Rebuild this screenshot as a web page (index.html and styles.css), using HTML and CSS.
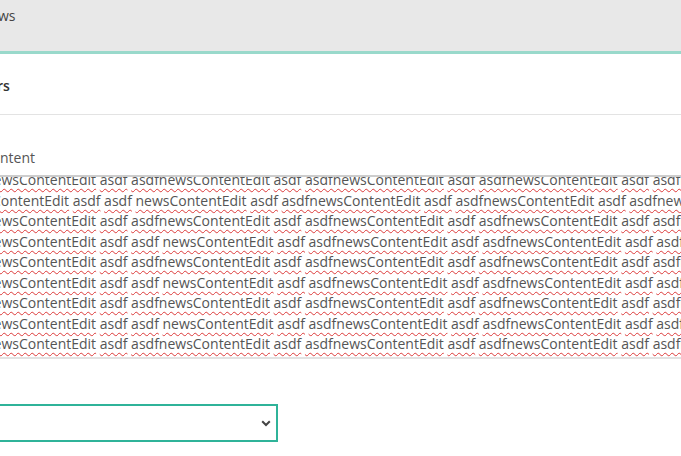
FILE: index.html
```html
<!DOCTYPE html>
<html lang="en">
<head>
<meta charset="utf-8">
<title>Edit News</title>
<link rel="stylesheet" href="styles.css">
</head>
<body>
<header class="topbar"><span class="crumb">ws</span></header>
<section class="panel-head"><h2 class="panel-title">rs</h2></section>
<div class="field">
  <label class="field-label">ntent</label>
  <div class="textarea">
    <div class="lines">
      <div class="line line-a">newsContentEdit asdf asdfnewsContentEdit asdf asdfnewsContentEdit asdf asdfnewsContentEdit asdf asdfnewsContentEdit asdf asdf</div>
      <div class="line line-c">newsContentEdit asdf asdf newsContentEdit asdf asdfnewsContentEdit asdf asdfnewsContentEdit asdf asdfnewsContentEdit asdf asdf</div>
      <div class="line line-a">newsContentEdit asdf asdfnewsContentEdit asdf asdfnewsContentEdit asdf asdfnewsContentEdit asdf asdfnewsContentEdit asdf asdf</div>
      <div class="line line-a">newsContentEdit asdf asdf newsContentEdit asdf asdfnewsContentEdit asdf asdfnewsContentEdit asdf asdfnewsContentEdit asdf asdf</div>
      <div class="line line-a">newsContentEdit asdf asdfnewsContentEdit asdf asdfnewsContentEdit asdf asdfnewsContentEdit asdf asdfnewsContentEdit asdf asdf</div>
      <div class="line line-a">newsContentEdit asdf asdf newsContentEdit asdf asdfnewsContentEdit asdf asdfnewsContentEdit asdf asdfnewsContentEdit asdf asdf</div>
      <div class="line line-a">newsContentEdit asdf asdfnewsContentEdit asdf asdfnewsContentEdit asdf asdfnewsContentEdit asdf asdfnewsContentEdit asdf asdf</div>
      <div class="line line-a">newsContentEdit asdf asdf newsContentEdit asdf asdfnewsContentEdit asdf asdfnewsContentEdit asdf asdfnewsContentEdit asdf asdf</div>
      <div class="line line-a">newsContentEdit asdf asdfnewsContentEdit asdf asdfnewsContentEdit asdf asdfnewsContentEdit asdf asdfnewsContentEdit asdf asdf</div>
    </div>
  </div>
</div>
<div class="select">
  <span class="select-value"></span>
  <svg class="chevron" width="10" height="7" viewBox="0 0 10 7"><path d="M1.2 1.2 L5 5 L8.8 1.2" fill="none" stroke="#444" stroke-width="2"/></svg>
</div>
<script src="script.js"></script>
</body>
</html>
```
FILE: styles.css
```css
html, body {
  margin: 0;
  padding: 0;
  overflow: hidden;
  background: #fff;
  font-family: "Open Sans", "Liberation Sans", sans-serif;
  font-size: 14px;
  color: #555;
}
.topbar {
  height: 51px;
  background: #e8e8e8;
  border-bottom: 3px solid #99d9cb;
  box-sizing: content-box;
  padding: 0;
  line-height: 20px;
}
.crumb {
  display: block;
  padding-top: 6px;
  margin-left: -2px;
  color: #444;
}
.panel-head {
  height: 61px;
  border-bottom: 1px solid #e3e3e3;
  box-sizing: border-box;
  padding-top: 22px;
}
.panel-title {
  margin: 0 0 0 -3px;
  font-size: 14px;
  line-height: 20px;
  font-weight: 600;
  color: #333;
}
.field {
  padding-top: 33px;
}
.field-label {
  display: block;
  line-height: 20px;
  margin-bottom: 7px;
  color: #555;
}
.textarea {
  border-top: 2px solid #cdcdcd;
  border-bottom: 2px solid #e2e2e2;
  height: 180px;
  overflow: hidden;
}
.lines {
  margin-top: -7px;
}
.line {
  white-space: nowrap;
  line-height: 20.5px;
  color: #555;
}
.line-a { margin-left: -15px; }
.line-c { margin-left: -42px; }
.w {
  text-decoration: underline wavy #dc3a3a;
  text-decoration-thickness: 1.4px;
  text-underline-offset: 3px;
}
.select {
  margin-top: 45px;
  width: 278px;
  height: 38px;
  box-sizing: border-box;
  border: 2px solid #2fb399;
  border-left: none;
  display: flex;
  align-items: center;
  justify-content: flex-end;
  padding-right: 5px;
}
.chevron {
  display: block;
  margin-top: 1px;
}
```
FILE: script.js
```js
document.querySelectorAll('.line').forEach(function (el) {
  var words = el.textContent.split(' ');
  el.textContent = '';
  words.forEach(function (w, i) {
    var s = document.createElement('span');
    s.className = 'w';
    s.textContent = w;
    el.appendChild(s);
    if (i < words.length - 1) el.appendChild(document.createTextNode(' '));
  });
});
```
